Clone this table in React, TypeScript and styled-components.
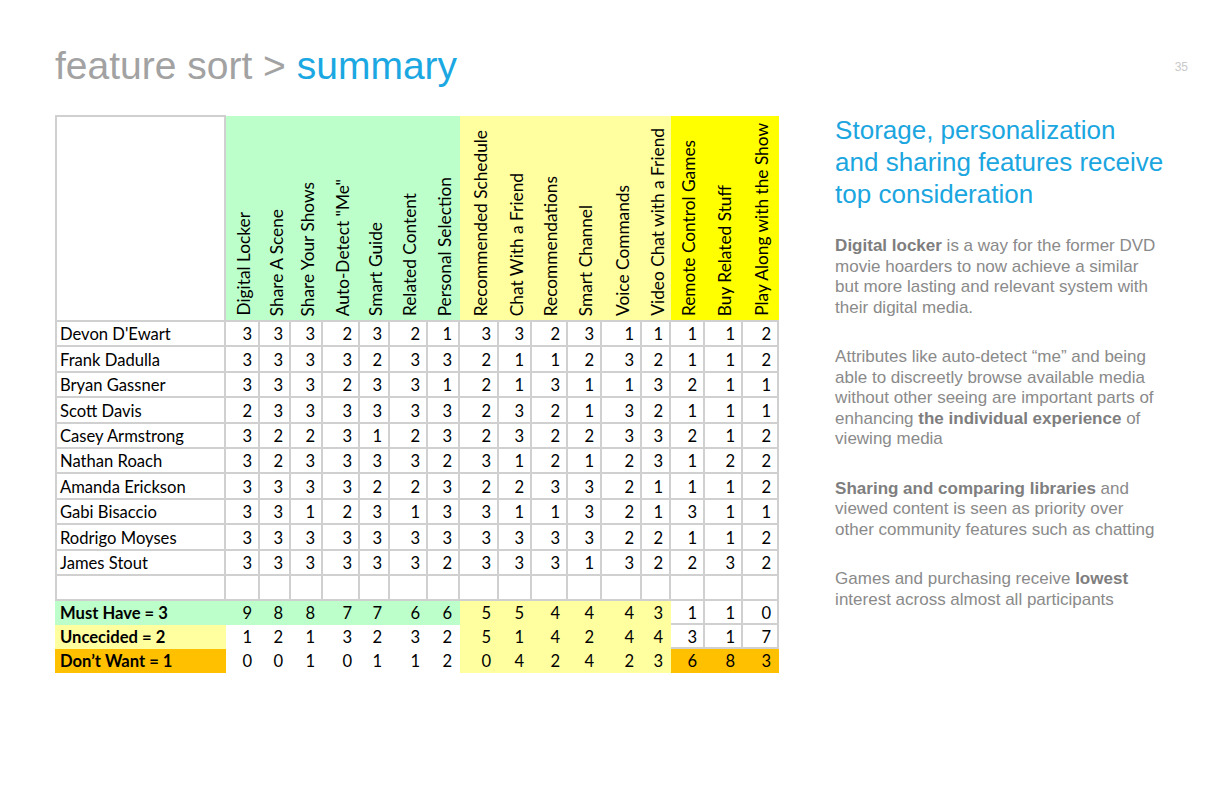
import React from "react";
import styled, { createGlobalStyle } from "styled-components";

// palette taken from the spreadsheet fills
const GREEN = "#bcffca";
const PALE = "#ffff9f";
const YELLOW = "#ffff00";
const ORANGE = "#ffc000";
const WHITE = "#ffffff";
const GRID = "#d0d0d0";

const GlobalStyle = createGlobalStyle`
  html, body {
    margin: 0;
    padding: 0;
    background: #fff;
  }
  body {
    font-family: "Liberation Sans", Arial, sans-serif;
  }
`;

// STYLES SECTION

const Slide = styled.div`
  width: 1224px;
  height: 792px;
  box-sizing: border-box;
  padding: 46px 36px 0 55px;
  overflow: hidden;
`;

const TitleBar = styled.header`
  display: flex;
  justify-content: space-between;
  align-items: flex-start;
`;

const Title = styled.h1`
  margin: 0;
  font-size: 39px;
  line-height: 39px;
  font-weight: normal;
  color: #a2a2a2;
`;

const Accent = styled.span`
  color: #1ba8e2;
`;

const PageNum = styled.span`
  margin-top: 14px;
  font-size: 12px;
  color: #c9c9c9;
`;

const Content = styled.main`
  display: flex;
  align-items: flex-start;
  gap: 56px;
  margin-top: 30px;
`;

const Sheet = styled.table`
  border-collapse: separate;
  border-spacing: 0;
  table-layout: fixed;
  width: 724px;
  font-family: Lato, "Open Sans", sans-serif;
  font-size: 16.6px;
  color: #000;
`;

const Col = styled.col<{ $w: number }>`
  width: ${(p) => p.$w}px;
`;

const Row = styled.tr<{ $h: number }>`
  height: ${(p) => p.$h}px;
`;

const CornerCell = styled.th`
  box-sizing: border-box;
  padding: 0;
  border: 2px solid ${GRID};
`;

// one header cell per colour group, the feature names laid out inside it
const GroupHead = styled.th<{ $fill: string }>`
  box-sizing: border-box;
  height: 207px;
  padding: 0;
  background: ${(p) => p.$fill};
  border-top: 1px solid #fff;
  border-bottom: 2px solid ${GRID};
  vertical-align: bottom;
  font-weight: normal;
  font-size: 17.3px;
`;

const Labels = styled.div`
  display: flex;
  align-items: flex-end;
  height: 204px;
`;

const Label = styled.div<{ $w: number }>`
  flex: none;
  width: ${(p) => p.$w}px;
  display: flex;
  justify-content: center;
  padding: 0 0 4px 2px;
  box-sizing: border-box;
`;

const Rotated = styled.span`
  writing-mode: vertical-rl;
  transform: rotate(180deg);
  white-space: nowrap;
  line-height: 22px;
`;

const Cell = styled.td<{ $fill?: string; $name?: boolean; $bold?: boolean }>`
  box-sizing: border-box;
  padding: ${(p) => (p.$name ? "2px 4px 0 3px" : "2px 6px 0 2px")};
  background: ${(p) => p.$fill ?? "#fff"};
  border-right: 2px solid ${(p) => p.$fill ?? GRID};
  border-bottom: 2px solid ${(p) => p.$fill ?? GRID};
  border-left: ${(p) => (p.$name ? `2px solid ${p.$fill ?? GRID}` : "none")};
  text-align: ${(p) => (p.$name ? "left" : "right")};
  font-weight: ${(p) => (p.$bold ? 700 : 400)};
  white-space: nowrap;
  line-height: 1;
  overflow: hidden;
`;

const Notes = styled.aside`
  width: 330px;
  color: #8a8a8a;
`;

const Lead = styled.h2`
  margin: -1px 0 26px;
  font-size: 26px;
  line-height: 32px;
  font-weight: normal;
  color: #1ba6df;
`;

const Note = styled.p`
  margin: 0 0 29px;
  font-size: 17px;
  line-height: 20.5px;

  b {
    color: #7e7e7e;
  }
`;

// DATA SECTION

const groups = [
  {
    tone: GREEN,
    features: [
      { label: "Digital Locker", w: 34 },
      { label: "Share A Scene", w: 31 },
      { label: "Share Your Shows", w: 32 },
      { label: 'Auto-Detect "Me"', w: 37 },
      { label: "Smart Guide", w: 30 },
      { label: "Related Content", w: 38 },
      { label: "Personal Selection", w: 32 },
    ],
  },
  {
    tone: PALE,
    features: [
      { label: "Recommended Schedule", w: 39 },
      { label: "Chat With a Friend", w: 33 },
      { label: "Recommendations", w: 36 },
      { label: "Smart Channel", w: 34 },
      { label: "Voice Commands", w: 40 },
      { label: "Video Chat with a Friend", w: 29 },
    ],
  },
  {
    tone: YELLOW,
    features: [
      { label: "Remote Control Games", w: 34 },
      { label: "Buy Related Stuff", w: 38 },
      { label: "Play Along with the Show", w: 36 },
    ],
  },
];

const features = groups.flatMap((g) => g.features);

const people: [string, number[]][] = [
  ["Devon D'Ewart", [3, 3, 3, 2, 3, 2, 1, 3, 3, 2, 3, 1, 1, 1, 1, 2]],
  ["Frank Dadulla", [3, 3, 3, 3, 2, 3, 3, 2, 1, 1, 2, 3, 2, 1, 1, 2]],
  ["Bryan Gassner", [3, 3, 3, 2, 3, 3, 1, 2, 1, 3, 1, 1, 3, 2, 1, 1]],
  ["Scott Davis", [2, 3, 3, 3, 3, 3, 3, 2, 3, 2, 1, 3, 2, 1, 1, 1]],
  ["Casey Armstrong", [3, 2, 2, 3, 1, 2, 3, 2, 3, 2, 2, 3, 3, 2, 1, 2]],
  ["Nathan Roach", [3, 2, 3, 3, 3, 3, 2, 3, 1, 2, 1, 2, 3, 1, 2, 2]],
  ["Amanda Erickson", [3, 3, 3, 3, 2, 2, 3, 2, 2, 3, 3, 2, 1, 1, 1, 2]],
  ["Gabi Bisaccio", [3, 3, 1, 2, 3, 1, 3, 3, 1, 1, 3, 2, 1, 3, 1, 1]],
  ["Rodrigo Moyses", [3, 3, 3, 3, 3, 3, 3, 3, 3, 3, 3, 2, 2, 1, 1, 2]],
  ["James Stout", [3, 3, 3, 3, 3, 3, 2, 3, 3, 3, 1, 3, 2, 2, 3, 2]],
];

// fill per column group: green features, pale features, bright features
const totals: { label: string; fill: string; groups: (string | undefined)[]; values: number[] }[] = [
  {
    label: "Must Have = 3",
    fill: GREEN,
    groups: [GREEN, PALE, undefined],
    values: [9, 8, 8, 7, 7, 6, 6, 5, 5, 4, 4, 4, 3, 1, 1, 0],
  },
  {
    label: "Uncecided = 2",
    fill: PALE,
    groups: [WHITE, PALE, undefined],
    values: [1, 2, 1, 3, 2, 3, 2, 5, 1, 4, 2, 4, 4, 3, 1, 7],
  },
  {
    label: "Don\u2019t Want = 1",
    fill: ORANGE,
    groups: [WHITE, PALE, ORANGE],
    values: [0, 0, 1, 0, 1, 1, 2, 0, 4, 2, 4, 2, 3, 6, 8, 3],
  },
];

const groupOf = (i: number) => (i < 7 ? 0 : i < 13 ? 1 : 2);

// RENDER SECTION

function FeatureTable() {
  return (
    <Sheet>
      <colgroup>
        <Col $w={171} />
        {features.map((f) => (
          <Col key={f.label} $w={f.w} />
        ))}
      </colgroup>
      <thead>
        <tr>
          <CornerCell />
          {groups.map((g) => (
            <GroupHead key={g.tone} colSpan={g.features.length} $fill={g.tone}>
              <Labels>
                {g.features.map((f) => (
                  <Label key={f.label} $w={f.w}>
                    <Rotated>{f.label}</Rotated>
                  </Label>
                ))}
              </Labels>
            </GroupHead>
          ))}
        </tr>
      </thead>
      <tbody>
        {people.map(([name, scores]) => (
          <Row $h={25.4} key={name}>
            <Cell $name>{name}</Cell>
            {scores.map((s, i) => (
              <Cell key={i}>{s}</Cell>
            ))}
          </Row>
        ))}
        <Row $h={25.4}>
          <Cell $name />
          {features.map((f) => (
            <Cell key={f.label} />
          ))}
        </Row>
        {totals.map((t) => (
          <Row $h={24} key={t.label}>
            <Cell $name $bold $fill={t.fill}>
              {t.label}
            </Cell>
            {t.values.map((v, i) => (
              <Cell key={i} $fill={t.groups[groupOf(i)]}>
                {v}
              </Cell>
            ))}
          </Row>
        ))}
      </tbody>
    </Sheet>
  );
}

export default function App() {
  return (
    <>
      <GlobalStyle />
      <Slide>
        <TitleBar>
          <Title>
            feature sort &gt; <Accent>summary</Accent>
          </Title>
          <PageNum>35</PageNum>
        </TitleBar>
        <Content>
          <FeatureTable />
          <Notes>
            <Lead>Storage, personalization and sharing features receive top consideration</Lead>
            <Note>
              <b>Digital locker</b> is a way for the former DVD movie hoarders to now achieve a similar but more
              lasting and relevant system with their digital media.
            </Note>
            <Note>
              Attributes like auto-detect {"\u201cme\u201d"} and being able to discreetly browse available media
              without other seeing are important parts of enhancing <b>the individual experience</b> of viewing media
            </Note>
            <Note>
              <b>Sharing and comparing libraries</b> and viewed content is seen as priority over other community
              features such as chatting
            </Note>
            <Note>
              Games and purchasing receive <b>lowest</b> interest across almost all participants
            </Note>
          </Notes>
        </Content>
      </Slide>
    </>
  );
}
